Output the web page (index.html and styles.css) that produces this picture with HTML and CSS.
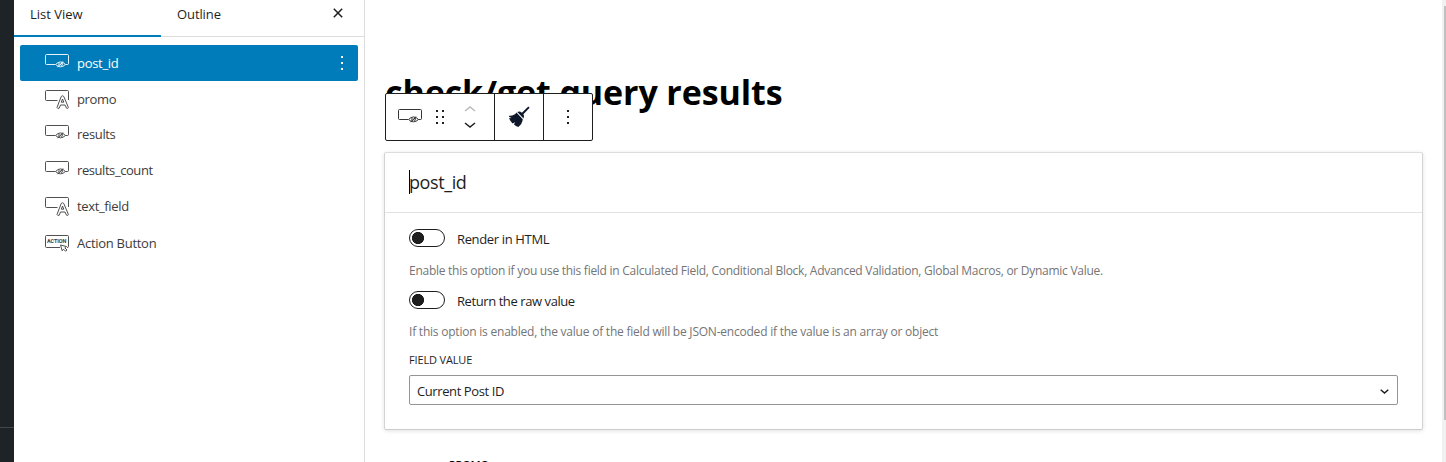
FILE: index.html
```html
<!DOCTYPE html>
<html lang="en">
<head>
<meta charset="utf-8">
<title>Block editor</title>
<link rel="stylesheet" href="styles.css">
</head>
<body>
<svg class="defs" width="0" height="0">
  <defs>
    <symbol id="hidden-field" viewBox="0 0 24 20">
      <path d="M10 10.500H1.500Q.5 10.500 .5 9.500V1.500Q.5.5 1.500.5H22.500Q23.500.5 23.500 1.500V9.500Q23.500 10.500 22.500 10.500H20.500" />
      <path d="M10.500 10.500Q15.500 5.300 20.500 10.500Q15.500 15.200 10.500 10.500Z M12.500 13.200L18 7.500M14.200 8.800Q13.300 10.300 14.200 11.800M17.200 9Q18 10.500 16.500 12M15 11.500L17 9" />
    </symbol>
    <symbol id="text-field" viewBox="0 0 24 20">
      <path d="M12.500 10.500H1.500Q.5 10.500 .5 9.500V1.500Q.5.5 1.500.5H22.500Q23.500.5 23.500 1.500V10" />
      <path d="M12 17.500L16.200 6.500Q17.500 5 18.800 6.500L23.400 17.500Q23.200 18.900 21.500 18.200L20 15H15.500L14.200 18.200Q12.500 19 12 17.500ZM16.300 12.200L17.500 9L18.800 12.200Z" />
    </symbol>
    <symbol id="action" viewBox="0 0 24 20">
      <path d="M15 12.500H1.500Q.5 12.500 .5 11.500V1.500Q.5.5 1.500.5H22.500Q23.500.5 23.500 1.500V11.500Q23.500 12.500 22 12.500" />
      <path d="M15.500 10L21.500 11.500L19.800 12.800L22 15L20.500 16.200L18.500 14.200L17.200 15.800Z" class="cursor" />
    </symbol>
  </defs>
</svg>
<div class="editor">
  <nav class="admin"></nav>
  <aside class="sidebar">
    <div class="tabs">
      <span class="tab active">List View</span>
      <span class="tab">Outline</span>
      <svg class="close" viewBox="0 0 10 10"><path d="M.8.8L9.200 9.200M9.200.8L.8 9.200" /></svg>
    </div>
    <div class="tree">
      <div class="row selected"><svg class="icon"><use href="#hidden-field" /></svg><span class="name">post_id</span><svg class="more" viewBox="0 0 2 14"><path d="M0 0h2v2H0zM0 6h2v2H0zM0 12h2v2H0z" /></svg></div>
      <div class="row"><svg class="icon"><use href="#text-field" /></svg><span class="name">promo</span></div>
      <div class="row short"><svg class="icon"><use href="#hidden-field" /></svg><span class="name">results</span></div>
      <div class="row"><svg class="icon"><use href="#hidden-field" /></svg><span class="name count">results_count</span></div>
      <div class="row next-up"><svg class="icon"><use href="#text-field" /></svg><span class="name">text_field</span></div>
      <div class="row tall"><span class="action-icon"><svg class="icon"><use href="#action" /></svg><b class="action-word">ACTION</b></span><span class="name wide">Action Button</span></div>
    </div>
  </aside>
  <main class="canvas">
    <h1 class="title">check/get query results</h1>
    <div class="toolbar">
      <div class="group first">
        <svg class="icon"><use href="#hidden-field" /></svg>
        <svg class="grip" viewBox="0 0 8 14"><path d="M0 0h2v2H0zM6 0h2v2H6zM0 6h2v2H0zM6 6h2v2H6zM0 12h2v2H0zM6 12h2v2H6z" /></svg>
        <svg class="movers" viewBox="0 0 12 22"><path class="up" d="M1 5L6 1L11 5" /><path d="M1 17L6 21L11 17" /></svg>
      </div>
      <div class="group mid">
        <svg class="brush" viewBox="0 0 22 22"><path d="M20.300.5L21.600 1.700L15.400 8.200Q17 10.500 15.500 12.500L9.300 6Q11.500 4.500 13.900 6.700Z" /><path d="M8.400 6.600L14.800 13.300Q14.300 18 10.300 21Q7.800 20.300 6 18.500L7 16.300L4.600 17.400Q2.300 15.200 1 12.200L3.600 12L1.300 10.900L.9 9.700Q6.300 10.200 8.400 6.600Z" /></svg>
      </div>
      <div class="group last"><svg class="more" viewBox="0 0 2 14"><path d="M0 0h2v2H0zM0 6h2v2H0zM0 12h2v2H0z" /></svg></div>
    </div>
    <section class="card">
      <header class="card-head"><i class="caret"></i><span>post_id</span></header>
      <div class="card-body">
        <div class="option"><span class="switch"></span><span class="label">Render in HTML</span></div>
        <p class="help">Enable this option if you use this field in Calculated Field, Conditional Block, Advanced Validation, Global Macros, or Dynamic Value.</p>
        <div class="option second"><span class="switch"></span><span class="label raw">Return the raw value</span></div>
        <p class="help two">If this option is enabled, the value of the field will be JSON-encoded if the value is an array or object</p>
        <div class="caption">FIELD VALUE</div>
        <div class="select"><span>Current Post ID</span><svg class="chevron" viewBox="0 0 9 5"><path d="M.7.8L4.500 4L8.300.8" /></svg></div>
      </div>
    </section>
    <div class="next">PROMO</div>
  </main>
  <div class="scrollbar"><div class="thumb"></div></div>
</div>
</body>
</html>
```
FILE: styles.css
```css
* { box-sizing: border-box; }
body { margin: 0; overflow: hidden; background: #fff; color: #1e1e1e; font: 13px/18px "Open Sans", "Noto Sans", sans-serif; }
svg { display: block; flex: none; fill: none; stroke: currentColor; }
.defs { position: absolute; }
.editor { display: flex; width: 1446px; height: 462px; overflow: hidden; }
.admin { width: 14px; background: linear-gradient(#43474b, #43474b) 0 427px / 14px 1px no-repeat #1d2327; flex: none; }
.sidebar { width: 351px; flex: none; border-right: 1px solid #ddd; }
.tabs { display: flex; height: 37px; border-bottom: 1px solid #ddd; }
.tab { width: 147px; height: 37px; padding: 5px 0 0 16px; letter-spacing: -.1px; }
.tab.active { border-bottom: 2px solid #007cba; letter-spacing: 0; }
.close { width: 10px; height: 10px; margin: 8px 0 0 25px; stroke-width: 1.500; }
.tree { padding: 8px 6px 0; }
.row { display: flex; align-items: center; height: 36px; padding-left: 25px; color: #3c3c3c; }
.row.short { height: 34px; }
.row.short + .row { height: 38px; }
.row.next-up { height: 34px; }
.row.tall { height: 40px; }
.icon { width: 24px; height: 20px; margin-top: 2px; stroke-width: .9; }
.name { margin-left: 8px; letter-spacing: -.35px; }
.name.count { letter-spacing: -.43px; }
.name.wide { letter-spacing: -.28px; }
.selected { background: #007cba; color: #fff; border-radius: 2px; }
.selected .name { font-weight: 500; letter-spacing: -.3px; }
.more { width: 2px; height: 14px; fill: currentColor; stroke: none; }
.selected .more { margin: 0 15px 0 auto; }
.action-icon { position: relative; }
.tall .icon { margin-top: 3px; }
.cursor { fill: #fff; }
.action-word { position: absolute; left: 2px; top: 5px; width: 20px; font: 700 5.500px/8px Roboto, sans-serif; letter-spacing: -.1px; }
.canvas { width: 1077px; flex: none; padding: 67px 0 0 20px; }
.title { margin: 0; height: 51px; font: 700 34px/50px "Open Sans", "Noto Sans", sans-serif; letter-spacing: -.1px; color: #000; white-space: nowrap; }
.toolbar { position: relative; display: flex; width: 208px; height: 48px; margin-top: -25px; border: 1px solid #1e1e1e; border-radius: 2px; background: #fff; }
.group { display: flex; align-items: center; }
.first { width: 109px; padding-left: 12px; border-right: 1px solid #1e1e1e; }
.first .icon { margin-top: 4px; }
.grip { width: 8px; height: 14px; margin-left: 14px; fill: currentColor; stroke: none; }
.movers { width: 12px; height: 22px; margin-left: 20px; stroke-width: 1.500; }
.up { stroke: #bbb; }
.mid { width: 49px; justify-content: center; border-right: 1px solid #1e1e1e; }
.brush { width: 22px; height: 22px; fill: #0f172a; stroke: none; }
.last { flex: 1; justify-content: center; }
.card { width: 1039px; height: 278px; margin: 11px 0 0 -1px; border: 1px solid #ddd; border-color: #ddd #d3d3d3 #ccc; border-radius: 2px; box-shadow: 0 1px 4px rgba(0,0,0,.12); }
.card-head { display: flex; align-items: center; height: 60px; padding: 0 0 1px 24px; border-bottom: 1px solid #e2e2e2; font-size: 18px; line-height: 24px; letter-spacing: -.4px; }
.caret { width: 1px; height: 24px; margin-right: -1px; background: #000; }
.card-body { padding: 16px 24px 0; }
.option { display: flex; height: 20px; }
.switch { width: 36px; height: 18px; border: 1px solid #1e1e1e; border-radius: 9px; background: radial-gradient(circle at 8px 8px, #1e1e1e 5.800px, transparent 6.300px); }
.label { margin: 1px 0 0 12px; letter-spacing: -.35px; }
.label.raw { letter-spacing: -.42px; }
.help { margin: 13px 0 0; font-size: 12px; line-height: 18px; color: #757575; letter-spacing: -.27px; white-space: nowrap; }
.second { margin-top: 11px; }
.help.two { margin-top: 12px; letter-spacing: -.22px; }
.caption { margin-top: 12px; font-size: 11px; line-height: 14px; font-weight: 500; letter-spacing: -.15px; }
.select { display: flex; align-items: center; justify-content: space-between; height: 30px; margin-top: 8px; padding: 2px 8px 0 7px; border: 1px solid #949494; border-radius: 2px; letter-spacing: -.4px; }
.chevron { width: 9px; height: 5px; stroke-width: 1.500; }
.next { margin: 27px 0 0 64px; font-size: 11px; line-height: 16px; font-weight: 600; letter-spacing: -.3px; color: #000; }
.scrollbar { flex: 1; padding: 6px 0 0 2px; background: #f1f1f1; }
.thumb { height: 414px; background: #c1c1c1; }
```
